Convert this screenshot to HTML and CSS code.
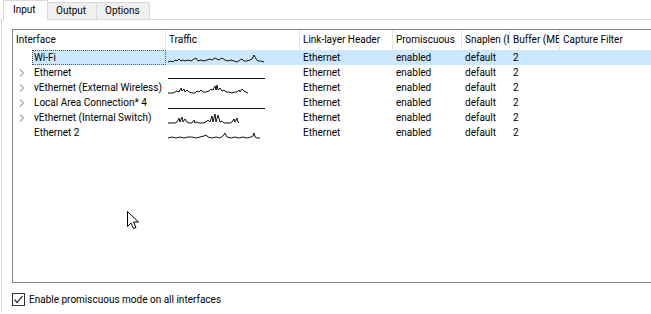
FILE: index.html
```html
<!DOCTYPE html>
<html>
<head>
<meta charset="utf-8">
<link rel="stylesheet" href="styles.css">
</head>
<body>
<div class="tabs">
  <div class="tab active">Input</div>
  <div class="tab">Output</div>
  <div class="tab">Options</div>
</div>
<div class="pane">
  <div class="list">
    <div class="row head">
      <div class="cell">Interface</div>
      <div class="cell">Traffic</div>
      <div class="cell">Link-layer Header</div>
      <div class="cell">Promiscuous</div>
      <div class="cell">Snaplen (B)</div>
      <div class="cell">Buffer (MB)</div>
      <div class="cell">Capture Filter</div>
    </div>
    <div class="row sel">
      <div class="cell name"><span class="exp"></span><span class="focus">Wi-Fi</span></div>
      <div class="cell spark"><svg width="98" height="14" viewBox="0 0 98 14"><polyline points="0,11 3,10 5,11 7,9 9,10 11,8 13,10 15,9 17,10 20,9 23,10 26,8 28,7 30,10 33,9 36,10 39,9 42,8 44,9 47,7 49,8 51,9 54,7 57,9 60,10 63,9 66,10 69,11 72,9 74,8 76,10 79,10 82,9 84,8 86,4 88,8 90,10 93,10 96,11"/></svg></div>
      <div class="cell">Ethernet</div>
      <div class="cell">enabled</div>
      <div class="cell">default</div>
      <div class="cell">2</div>
      <div class="cell"></div>
    </div>
    <div class="row">
      <div class="cell name"><span class="exp"><svg width="6" height="8" viewBox="0 0 6 8"><path d="M1 0.5 L4.5 4 L1 7.5"/></svg></span>Ethernet</div>
      <div class="cell spark"><svg width="98" height="14" viewBox="0 0 98 14"><polyline points="0,12.5 97,12.5"/></svg></div>
      <div class="cell">Ethernet</div>
      <div class="cell">enabled</div>
      <div class="cell">default</div>
      <div class="cell">2</div>
      <div class="cell"></div>
    </div>
    <div class="row">
      <div class="cell name"><span class="exp"><svg width="6" height="8" viewBox="0 0 6 8"><path d="M1 0.5 L4.5 4 L1 7.5"/></svg></span>vEthernet (External Wireless)</div>
      <div class="cell spark"><svg width="98" height="14" viewBox="0 0 98 14"><polyline points="0,12 5,12 7,11 9,10 11,11 13,7 14,10 16,8 17,11 19,9 21,11 24,12 27,12 29,10 31,11 33,9 35,11 38,11 41,10 43,8 45,9 47,5 48,9 49,4 50,9 52,7 54,10 56,9 58,11 61,11 64,12 67,11 69,11 71,9 72,11 74,8 76,10 78,11 80,12"/></svg></div>
      <div class="cell">Ethernet</div>
      <div class="cell">enabled</div>
      <div class="cell">default</div>
      <div class="cell">2</div>
      <div class="cell"></div>
    </div>
    <div class="row">
      <div class="cell name"><span class="exp"><svg width="6" height="8" viewBox="0 0 6 8"><path d="M1 0.5 L4.5 4 L1 7.5"/></svg></span>Local Area Connection* 4</div>
      <div class="cell spark"><svg width="98" height="14" viewBox="0 0 98 14"><polyline points="0,12.5 97,12.5"/></svg></div>
      <div class="cell">Ethernet</div>
      <div class="cell">enabled</div>
      <div class="cell">default</div>
      <div class="cell">2</div>
      <div class="cell"></div>
    </div>
    <div class="row">
      <div class="cell name"><span class="exp"><svg width="6" height="8" viewBox="0 0 6 8"><path d="M1 0.5 L4.5 4 L1 7.5"/></svg></span>vEthernet (Internal Switch)</div>
      <div class="cell spark"><svg width="98" height="14" viewBox="0 0 98 14"><polyline points="0,12 7,12 9,11 11,7 12,11 14,6 15,11 17,8 19,11 21,12 24,12 26,9 27,12 29,11 31,12 35,12 38,11 40,9 42,11 44,5 45,11 47,3 48,11 50,4 52,11 54,10 56,12 62,12 64,11 66,8 67,11 69,7 70,11 71,12"/></svg></div>
      <div class="cell">Ethernet</div>
      <div class="cell">enabled</div>
      <div class="cell">default</div>
      <div class="cell">2</div>
      <div class="cell"></div>
    </div>
    <div class="row">
      <div class="cell name"><span class="exp"></span>Ethernet 2</div>
      <div class="cell spark"><svg width="98" height="14" viewBox="0 0 98 14"><polyline points="0,12 4,11 8,12 12,11 16,12 20,11 24,11 28,12 32,11 36,10 38,9 40,11 44,12 48,11 52,12 55,10 57,7 59,11 63,12 67,11 71,12 75,11 79,12 83,11 85,10 86,7 87,11 89,12 92,12"/></svg></div>
      <div class="cell">Ethernet</div>
      <div class="cell">enabled</div>
      <div class="cell">default</div>
      <div class="cell">2</div>
      <div class="cell"></div>
    </div>
  </div>
  <label class="check">
    <span class="box"><svg width="11" height="11" viewBox="0 0 11 11"><path d="M1.5 5.5 L4 8.5 L9.5 2"/></svg></span>
    Enable promiscuous mode on all interfaces
  </label>
</div>
<svg class="cursor" width="13" height="19" viewBox="0 0 13 19"><path d="M0.5 0.5 L0.5 15.5 L4 12 L6.5 17.5 L9 16.5 L6.5 11 L11.5 11 Z"/></svg>
</body>
</html>
```
FILE: styles.css
```css
html, body {
  margin: 0;
  padding: 0;
  background: #ffffff;
  overflow: hidden;
  width: 651px;
  height: 314px;
}
body {
  font-family: "Roboto", "Noto Sans", sans-serif;
  font-size: 10px;
  color: #000;
  position: relative;
}
.tabs {
  display: flex;
  padding-left: 4px;
  height: 19px;
  align-items: flex-end;
}
.tab {
  height: 17px;
  line-height: 16px;
  padding: 0 8px;
  border: 1px solid #d9d9d9;
  border-bottom: none;
  background: #f0f0f0;
  margin-left: -1px;
  box-sizing: border-box;
  white-space: nowrap;
}
.tab:nth-child(1) { width: 45px; padding-left: 9px; }
.tab:nth-child(2) { width: 50px; }
.tab:nth-child(3) { width: 54px; }
.tab.active {
  background: #ffffff;
  line-height: 18px;
  position: relative;
  z-index: 1;
  margin-bottom: -1px;
  height: 20px;
}
.pane {
  border-top: 1px solid #d9d9d9;
  border-left: 1px solid #d9d9d9;
  margin-left: 1px;
  height: 294px;
  box-sizing: border-box;
  padding: 9px 0 0 10px;
}
.list {
  border: 1px solid #828790;
  border-right: none;
  height: 254px;
  box-sizing: border-box;
  width: 700px;
}
.row {
  display: grid;
  grid-template-columns: 153px 134px 93px 69px 48px 50px 150px;
  height: 15px;
  line-height: 15px;
}
.row.head {
  height: 20px;
  line-height: 20px;
}
.row.head .cell {
  border-right: 1px solid #e5e5e5;
  padding-left: 3px;
}
.cell {
  white-space: nowrap;
  overflow: hidden;
  padding-left: 3px;
  box-sizing: border-box;
  display: flex;
  align-items: center;
}
.cell.name {
  padding-left: 6px;
}
.exp {
  width: 15px;
  flex: none;
  display: flex;
  align-items: center;
}
.exp svg path {
  fill: none;
  stroke: #a6a6a6;
  stroke-width: 1.1;
}
.row.sel {
  background: linear-gradient(to right, transparent 19px, #cce8ff 19px);
}
.focus {
  display: block;
  flex: 1;
  height: 15px;
  line-height: 13px;
  border: 1px dotted #555;
  box-sizing: border-box;
  margin-left: -2px;
  padding-left: 1px;
}
.cell.spark {
  padding-left: 2px;
}
.spark svg polyline {
  fill: none;
  stroke: #111;
  stroke-width: 1;
}
.check {
  display: flex;
  align-items: center;
  margin-top: 9px;
  gap: 4px;
  height: 14px;
}
.box {
  width: 13px;
  height: 13px;
  border: 1px solid #333;
  box-sizing: border-box;
  display: flex;
  align-items: center;
  justify-content: center;
  background: #fff;
}
.box svg path {
  fill: none;
  stroke: #333;
  stroke-width: 1.2;
}
.cursor {
  position: absolute;
  left: 127px;
  top: 211px;
}
.cursor path {
  fill: #fff;
  stroke: #000;
  stroke-width: 1;
}
```
